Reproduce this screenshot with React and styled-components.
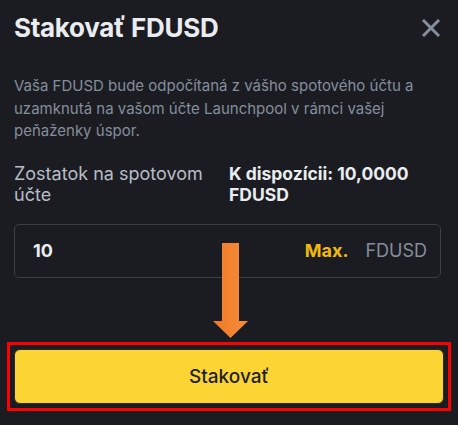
import React from "react";
import styled, { createGlobalStyle } from "styled-components";

const GlobalStyle = createGlobalStyle`
  html, body {
    margin: 0;
    padding: 0;
    background: #1b1c21;
  }
  body {
    font-family: Inter, "Noto Sans", sans-serif;
  }
`;

const Page = styled.div`
  position: relative;
  width: 458px;
  height: 425px;
  box-sizing: border-box;
  padding: 12px 17px 0 14px;
  background: #1b1c21;
  overflow: hidden;
`;

const Header = styled.div`
  display: flex;
  justify-content: space-between;
  align-items: center;
  height: 32px;
`;

const Title = styled.h1`
  margin: 0;
  font-size: 26px;
  line-height: 32px;
  font-weight: 700;
  color: #eaecef;
  letter-spacing: -0.3px;
`;

const CloseButton = styled.button`
  display: flex;
  align-items: center;
  justify-content: center;
  width: 24px;
  height: 24px;
  padding: 0;
  margin-right: -2px;
  border: none;
  background: transparent;
  cursor: pointer;
`;

const Description = styled.p`
  margin: 31px 0 0;
  font-size: 15px;
  line-height: 22.5px;
  color: #848e9c;
`;

const BalanceRow = styled.div`
  display: grid;
  grid-template-columns: 199px 1fr;
  column-gap: 16px;
  margin-top: 20px;
`;

const BalanceLabel = styled.div`
  font-size: 18px;
  line-height: 21px;
  color: #b7bdc6;
`;

const BalanceValue = styled.div`
  font-size: 17.5px;
  line-height: 21px;
  font-weight: 700;
  color: #eaecef;
`;

const InputBox = styled.div`
  display: flex;
  align-items: center;
  height: 54px;
  box-sizing: border-box;
  margin-top: 19px;
  padding: 0 13px 0 18px;
  border: 1px solid #3a3e46;
  border-radius: 5px;
`;

const Amount = styled.span`
  flex: 1;
  font-size: 18px;
  font-weight: 700;
  color: #eaecef;
`;

const MaxLink = styled.span`
  font-size: 18px;
  font-weight: 700;
  color: #f0b90b;
  margin-right: 17px;
`;

const Unit = styled.span`
  font-size: 18px;
  color: #848e9c;
`;

const Highlight = styled.div`
  margin: 64px -10px 0 -7px;
  padding: 4px;
  border: 3px solid #ff0000;
`;

const StakeButton = styled.button`
  display: block;
  width: 100%;
  height: 55px;
  border: 1px solid #2a2a20;
  border-radius: 6px;
  background: #fcd535;
  font-family: Inter, "Noto Sans", sans-serif;
  font-size: 19px;
  font-weight: 500;
  color: #1e2329;
  cursor: pointer;
`;

const Arrow = styled.svg`
  position: absolute;
  left: 213px;
  top: 243px;
`;

function CloseIcon() {
  return (
    <svg width="18" height="18" viewBox="0 0 18 18">
      <path
        d="M2 2 L16 16 M16 2 L2 16"
        stroke="#848e9c"
        strokeWidth="3"
        strokeLinecap="square"
      />
    </svg>
  );
}

export default function App() {
  return (
    <Page>
      <GlobalStyle />
      <Header>
        <Title>Stakovať FDUSD</Title>
        <CloseButton>
          <CloseIcon />
        </CloseButton>
      </Header>
      <Description>
        Vaša FDUSD bude odpočítaná z vášho spotového účtu a uzamknutá na vašom
        účte Launchpool v rámci vašej peňaženky úspor.
      </Description>
      <BalanceRow>
        <BalanceLabel>Zostatok na spotovom účte</BalanceLabel>
        <BalanceValue>K dispozícii: 10,0000 FDUSD</BalanceValue>
      </BalanceRow>
      <InputBox>
        <Amount>10</Amount>
        <MaxLink>Max.</MaxLink>
        <Unit>FDUSD</Unit>
      </InputBox>
      <Highlight>
        <StakeButton>Stakovať</StakeButton>
      </Highlight>
      <Arrow width="35" height="96" viewBox="0 0 35 96">
        <defs>
          <linearGradient id="arrowFill" x1="0" x2="1" y1="0" y2="0">
            <stop offset="0" stopColor="#ef7a26" />
            <stop offset="1" stopColor="#f68d3c" />
          </linearGradient>
        </defs>
        <path d="M9 0 H26 V78 H35 L17.5 95 L0 78 H9 Z" fill="url(#arrowFill)" />
      </Arrow>
    </Page>
  );
}
